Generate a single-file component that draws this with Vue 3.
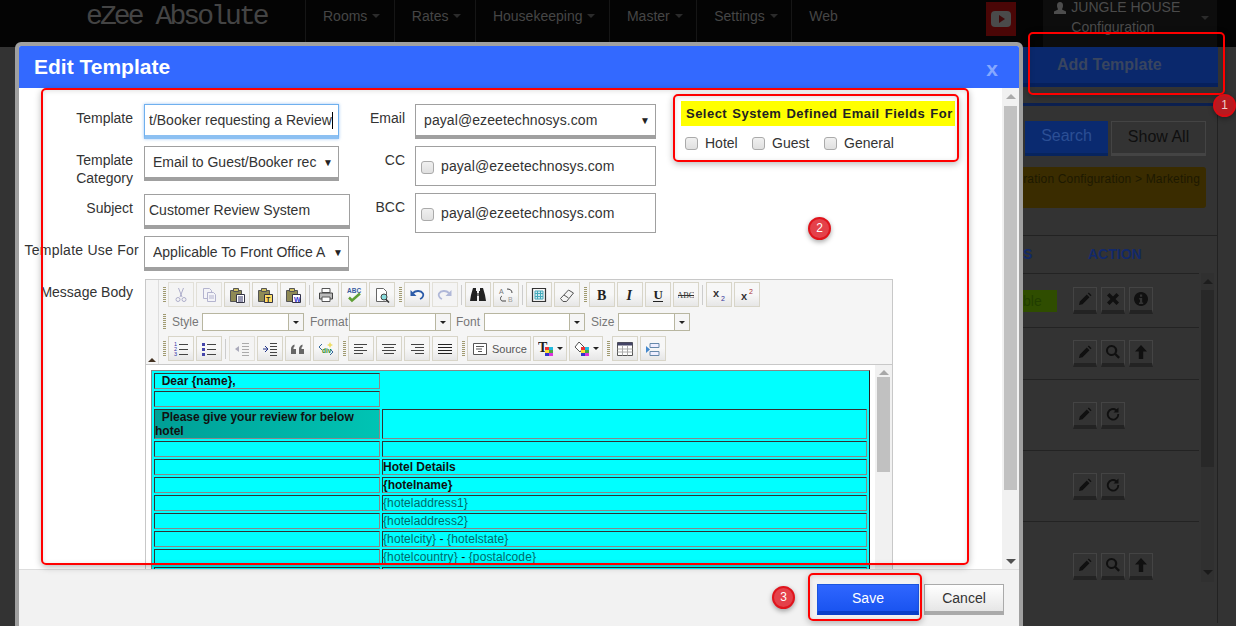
<script setup>
const p = (d, f = 'none', s = 'none', w = 1) => ({ d, f, s, w })
const c = (x, y, r) => `M${x - r} ${y}a${r} ${r} 0 1 0 ${2 * r} 0a${r} ${r} 0 1 0 ${-2 * r} 0z`
const t = (x, y, txt, size, fill, extra = {}) => ({ x, y, txt, size, fill, ...extra })
const serif = { family: 'Liberation Serif', weight: 700 }
const grid = (x, y) => [
  p(`M${x} ${y}h4v3h-4z`, '#e33'), p(`M${x + 4} ${y}h4v3h-4z`, '#2bd'),
  p(`M${x} ${y + 3}h4v3h-4z`, '#fd3'), p(`M${x + 4} ${y + 3}h4v3h-4z`, '#4a4'),
  p(`M${x} ${y + 6}h4v3h-4z`, '#33c'), p(`M${x + 4} ${y + 6}h4v3h-4z`, '#d3d')
]
const clip = (fill, mark, color) => [
  p('M1.5 3.5h11v11h-11z', '#8f8a55', '#555'), p('M4.5 1.5h5v3h-5z', '#d0c060', '#555'),
  p('M7.5 7.5h8v8h-8z', fill, '#334'), t(9, 14.5, mark, 7, color, { weight: 700 })
]
const lines = (rows, color = '#444') => p(rows.map(([x, y, l]) => `M${x} ${y}h${l}`).join(''), 'none', color, 1)
const icons = {
  cut: [p('M5.5 1l3.500 9M10.500 1L7 10', 'none', '#aeaecb'), p(c(5, 12.5, 2), 'none', '#aeaecb'), p(c(11, 12.5, 2), 'none', '#aeaecb')],
  copy: [p('M2.500 1.500h6l2 2v8h-8z', '#f4f4f8', '#b4b4cf'), p('M6.500 5.500h6l2 2v7h-8z', '#f4f4f8', '#b4b4cf'), lines([[8, 9, 5], [8, 11, 5]], '#b4b4cf')],
  paste: [...clip('#fff', '', '#000'), lines([[9, 10, 5], [9, 12, 5], [9, 14, 5]], '#336')],
  pastetext: clip('#fd6', 'T', '#222'),
  pasteword: clip('#fff', 'W', '#33c'),
  print: [p('M4 1.500h8v4H4z', '#fff', '#555'), p('M1.500 6h13v6h-13z', '#bbb', '#444'), p('M4 10h8v4.500H4z', '#fff', '#555')],
  spell: [t(1, 6, 'ABC', 6.5, '#3a5ba0', { weight: 700 }), p('M3 10.500l3 3 8-7', 'none', '#5f9e35', 2.5)],
  preview: [p('M2.500 1.500h7l3 3v10h-10z', '#fff', '#666'), p(c(10, 10, 3), '#8dd', '#444'), p('M12 12.500l3 3', 'none', '#333', 1.6)],
  undo: [p('M4 6c3-3 8-2.500 10 .5 1 2-.5 4.500-3 5.500', 'none', '#2b5ba8', 1.8), p('M1.500 3v6h6z', '#2b5ba8')],
  redo: [p('M12 6c-3-3-8-2.500-10 .5-1 2 .5 4.500 3 5.500', 'none', '#b0b8d8', 1.8), p('M14.500 3v6h-6z', '#b0b8d8')],
  find: [p('M3 1h3v3h1v10H0l1-6zM10 1h3l2 7 1 6H9V4h1z', '#222'), p('M7 6h2v3H7z', '#777')],
  replace: [t(1, 7, 'A', 7, '#777'), t(10, 15, 'B', 7, '#999'), p('M4 9c-2 1-2 4 0 5h4M9 2c3 0 5 1 5 4', 'none', '#444', 1)],
  selectall: [p('M1.500 1.500h13v13h-13z', 'none', '#333', 1.2), p('M4 4h8v8H4z', '#cfeaf0', '#4ab'), p('M6.500 4v8M9.500 4v8M4 6.500h8M4 9.500h8', 'none', '#4ab')],
  eraser: [p('M1.500 11.500l8-8.500 5 3-7 8.500H4z', '#f4f4f4', '#555'), p('M5 8l4.500 3', 'none', '#555')],
  bold: [t(3, 13, 'B', 14, '#222', serif)],
  italic: [t(4.500, 13, 'I', 14, '#222', { ...serif, style: 'italic' })],
  underline: [t(3.500, 12, 'U', 13, '#222', serif), p('M3 14.500h10', 'none', '#222', 1)],
  strike: [t(-1, 11, 'ABC', 8.500, '#333', { family: 'Liberation Serif' }), p('M-1 8.500h18', 'none', '#333', 1)],
  sub: [t(2, 10, 'x', 11, '#333', { weight: 700 }), t(10, 14, '2', 7, '#339')],
  sup: [t(2, 13, 'x', 11, '#333', { weight: 700 }), t(10, 7, '2', 7, '#a33')],
  ol: [t(1, 5, '1', 5.500, '#33a'), t(1, 10, '2', 5.500, '#33a'), t(1, 15, '3', 5.500, '#33a'), lines([[6, 3.5, 9], [6, 8.5, 9], [6, 13.5, 9]])],
  ul: [p('M1 2h3v3H1zM1 7h3v3H1zM1 12h3v3H1z', '#44a'), lines([[6, 3.5, 9], [6, 8.5, 9], [6, 13.5, 9]])],
  outdent: [lines([[8, 2.5, 7], [8, 5.5, 7], [8, 8.5, 7], [8, 11.5, 7], [8, 14.5, 7]], '#aaa'), p('M5 5v6L1 8z', '#aab')],
  indent: [lines([[8, 2.5, 7], [8, 5.5, 7], [8, 8.5, 7], [8, 11.5, 7], [8, 14.5, 7]]), p('M1 8h4M3 5l3 3-3 3', 'none', '#238')],
  quote: [p('M1 13V8c0-2 1-3.500 3.500-4.500v2C3.500 6 3.500 7 3.500 8H6v5zM9 13V8c0-2 1-3.500 3.500-4.500v2c-1 .5-1 1.500-1 2.500H14v5z', '#666')],
  div: [p('M4 3L1 6l3 3M12 8l3 3-3 3', 'none', '#369'), t(4, 12, 'div', 6.5, '#2a8a2a', { weight: 700 }), p('M12 1l1 2 2 1-2 1-1 2-1-2-2-1 2-1z', '#ed6')],
  left: [lines([[1, 3.5, 13], [1, 6.5, 9], [1, 9.5, 13], [1, 12.5, 9]])],
  center: [lines([[1, 3.5, 14], [3, 6.5, 10], [1, 9.5, 14], [3, 12.5, 10]])],
  right: [lines([[2, 3.5, 13], [6, 6.5, 9], [2, 9.5, 13], [6, 12.5, 9]])],
  justify: [lines([[1, 3.5, 14], [1, 6.5, 14], [1, 9.5, 14], [1, 12.5, 14]], '#222')],
  source: [p('M1.500 2.500h13v11h-13z', '#fff', '#555'), lines([[4, 5.5, 8], [4, 8, 6], [6, 10.5, 4]], '#555')],
  textcolor: [t(0, 11, 'T', 14, '#222', serif), ...grid(7, 6)],
  bgcolor: [p('M5 1l5 5-4 5-5-5z', '#fff', '#555'), ...grid(7, 6)],
  table: [p('M.5 1.500h15v13H.5z', '#fff', '#555'), p('M.5 1.500h15v3H.5z', '#446'), p('M5.500 4.500v10M10.500 4.500v10M.5 8h15M.5 11h15', 'none', '#aaa')],
  hr: [p('M5 2.500h9v4H5zM5 10.500h9v4H5z', '#eef', '#68a'), p('M1 5l4 3.500L1 12z', '#48c')]
}
const g = { kind: 'grip' }
const s = { kind: 'sep' }
const b = (icon, off = false) => ({ kind: 'btn', icon, off })
const row1 = [g, b('cut', true), b('copy', true), b('paste'), b('pastetext'), b('pasteword'), s, b('print'), b('spell'), b('preview'), g, b('undo'), b('redo', true), s, b('find'), b('replace'), s, b('selectall'), b('eraser'), g, b('bold'), b('italic'), b('underline'), b('strike'), s, b('sub'), b('sup')]
const row3 = [g, b('ol'), b('ul'), s, b('outdent', true), b('indent'), b('quote'), b('div'), g, b('left'), b('center'), b('right'), b('justify'), g,
  { kind: 'source', icon: 'source' }, { kind: 'color', icon: 'textcolor' }, { kind: 'color', icon: 'bgcolor' }, g, b('table'), b('hr')]
const combos = [
  { label: 'Style', cls: 'c-style' }, { label: 'Format', cls: 'c-format' }, { label: 'Font', cls: 'c-font' }, { label: 'Size', cls: 'c-size' }
]
const nav = ['Rooms', 'Rates', 'Housekeeping', 'Master', 'Settings', 'Web']
const detailRows = [
  [{ t: 'Hotel Details', b: 1 }], [{ t: '{hotelname}', b: 1 }], [{ t: '{hoteladdress1}', ph: 1 }], [{ t: '{hoteladdress2}', ph: 1 }],
  [{ t: '{hotelcity}', ph: 1 }, { t: ' - ' }, { t: '{hotelstate}', ph: 1 }],
  [{ t: '{hotelcountry}', ph: 1 }, { t: ' - ' }, { t: '{postalcode}', ph: 1 }], []
]
const actionIcons = {
  pencil: 'M2 14l.8-3.500 7-7 2.700 2.700-7 7zM10.800 2.500l1-1 2.700 2.700-1 1z',
  cross: 'M4.500 2L8 5.500 11.500 2 14 4.500 10.500 8l3.500 3.500-2.500 2.500L8 10.500 4.500 14 2 11.500 5.500 8 2 4.500z',
  info: 'M8 1a7 7 0 1 0 .01 0zM7 3.500h2.200v2.200H7zM6.200 7h3v4.500h1V13H6v-1.500h1V8.500h-.8z',
  search: 'M6.500 1a5.500 5.500 0 1 0 3.200 10l3.600 3.800 1.700-1.700-3.700-3.600A5.500 5.500 0 0 0 6.500 1zm0 2a3.500 3.500 0 1 1 0 7 3.500 3.500 0 0 1 0-7z',
  up: 'M8 1l6 6.500H10.200V15H5.800V7.500H2z',
  redo: 'M13.500 1.500v5h-5l1.800-1.800A4.300 4.300 0 1 0 12.300 8h1.900A6.200 6.200 0 1 1 11.700 3.300z'
}
const rows = [
  { h: 54, status: true, icons: ['pencil', 'cross', 'info'] },
  { h: 52, icons: ['pencil', 'search', 'up'] },
  { h: 71, icons: ['pencil', 'redo'] },
  { h: 71, icons: ['pencil', 'redo'] },
  { h: 61, low: true, icons: ['pencil', 'search', 'up'] }
]
</script>

<template>
  <div class="page">
    <header class="topbar">
      <div class="logo">eZee Absolute</div>
      <nav class="nav">
        <div v-for="n in nav" :key="n" class="nav-item">{{ n }}<i v-if="n !== 'Web'" class="caret"></i></div>
      </nav>
      <div class="yt">
        <svg width="20" height="16" viewBox="0 0 20 16"><rect width="20" height="16" rx="4" fill="#4a4a4a" /><path d="M8 4l6 4-6 4z" fill="#400a0a" /></svg>
      </div>
      <div class="user">
        <svg class="user-ico" width="14" height="14" viewBox="0 0 14 14"><path d="M7 1c2 0 3 1.500 3 3.500S9 8 9 8.500l4 2V13H1v-2.500l4-2C5 8 4 6.500 4 4.500S5 1 7 1z" fill="#4d4d4d" /></svg>
        <div class="user-text">JUNGLE HOUSE<br />Configuration</div>
        <i class="caret user-caret"></i>
      </div>
    </header>

    <aside class="side">
      <div class="add-btn">Add Template</div>
      <div class="panel">
        <div class="search-row">
          <div class="search-btn">Search</div>
          <div class="all-btn">Show All</div>
        </div>
        <div class="notice">ration Configuration &gt; Marketing</div>
        <div class="thead"><span class="th-s">S</span><span class="th-a">ACTION</span></div>
        <div class="tbody">
          <div class="trows">
            <div v-for="(r, i) in rows" :key="i" class="trow" :class="{ low: r.low }" :style="{ height: r.h + 'px' }">
              <div class="status" :class="{ on: r.status }">{{ r.status ? 'ble' : '' }}</div>
              <div v-for="ic in r.icons" :key="ic" class="act">
                <svg width="16" height="16" viewBox="0 0 16 16"><path :d="actionIcons[ic]" fill="#101010" /></svg>
              </div>
            </div>
          </div>
          <div class="side-scroll">
            <i class="arr-up dark"></i>
            <div class="side-thumb"></div>
            <i class="arr-down dark"></i>
          </div>
        </div>
      </div>
    </aside>

    <section class="modal">
      <div class="modal-head">
        <h1 class="modal-title">Edit Template</h1>
        <span class="modal-x">x</span>
      </div>
      <div class="modal-body">
        <div class="content">
          <div class="top">
            <div class="col-left">
              <div class="row r1">
                <label class="lab">Template</label>
                <div class="field focus f195"><span class="clip">t/Booker requesting a Review</span><i class="cursor"></i></div>
              </div>
              <div class="row r2">
                <label class="lab">Template Category</label>
                <div class="field sel f195"><span class="clipsel">Email to Guest/Booker rec</span><span class="tri">▼</span></div>
              </div>
              <div class="row r3">
                <label class="lab">Subject</label>
                <div class="field f206">Customer Review System</div>
              </div>
              <div class="row">
                <label class="lab wide">Template Use For</label>
                <div class="field sel f205"><span class="clipsel">Applicable To Front Office A</span><span class="tri">▼</span></div>
              </div>
            </div>
            <div class="col-mid">
              <div class="row r1">
                <label class="lab2">Email</label>
                <div class="field sel f241"><span class="clipsel">payal@ezeetechnosys.com</span><span class="tri">▼</span></div>
              </div>
              <div class="row r1b">
                <label class="lab2">CC</label>
                <div class="box"><input class="cb" type="checkbox" /><span>payal@ezeetechnosys.com</span></div>
              </div>
              <div class="row">
                <label class="lab2">BCC</label>
                <div class="box"><input class="cb" type="checkbox" /><span>payal@ezeetechnosys.com</span></div>
              </div>
            </div>
            <div class="col-right">
              <div class="fields-title">Select System Defined Email Fields For</div>
              <div class="fields-checks">
                <label class="chk c1"><input class="cb" type="checkbox" />Hotel</label>
                <label class="chk c2"><input class="cb" type="checkbox" />Guest</label>
                <label class="chk"><input class="cb" type="checkbox" />General</label>
              </div>
            </div>
          </div>

          <div class="message">
            <label class="lab msg-lab">Message Body</label>
            <div class="editor">
              <div class="toolbar">
                <div class="collapse"><i class="collapse-tri"></i></div>
                <div class="bars">
                  <div class="bar">
                    <template v-for="(it, i) in row1" :key="i">
                      <i v-if="it.kind === 'grip'" class="grip"></i>
                      <i v-else-if="it.kind === 'sep'" class="tsep"></i>
                      <button v-else class="tbtn" :class="{ off: it.off }">
                        <svg width="16" height="16" viewBox="0 0 16 16">
                          <template v-for="(sh, j) in icons[it.icon]" :key="j">
                            <path v-if="sh.d" :d="sh.d" :fill="sh.f" :stroke="sh.s" :stroke-width="sh.w" />
                            <text v-else :x="sh.x" :y="sh.y" :font-size="sh.size" :fill="sh.fill" :font-weight="sh.weight || 400" :font-style="sh.style || 'normal'" :font-family="sh.family || 'Liberation Sans'">{{ sh.txt }}</text>
                          </template>
                        </svg>
                      </button>
                    </template>
                  </div>
                  <div class="bar bar2">
                    <i class="grip g2"></i>
                    <div v-for="co in combos" :key="co.label" class="combo-wrap" :class="co.cls">
                      <span class="combo-label">{{ co.label }}</span>
                      <div class="combo"><span class="combo-box"></span><span class="combo-btn"><i class="mini"></i></span></div>
                    </div>
                  </div>
                  <div class="bar bar3">
                    <template v-for="(it, i) in row3" :key="i">
                      <i v-if="it.kind === 'grip'" class="grip"></i>
                      <i v-else-if="it.kind === 'sep'" class="tsep"></i>
                      <button v-else class="tbtn" :class="[{ off: it.off }, it.kind === 'source' ? 'srcbtn' : '', it.kind === 'color' ? 'colbtn' : '']">
                        <svg width="16" height="16" viewBox="0 0 16 16">
                          <template v-for="(sh, j) in icons[it.icon]" :key="j">
                            <path v-if="sh.d" :d="sh.d" :fill="sh.f" :stroke="sh.s" :stroke-width="sh.w" />
                            <text v-else :x="sh.x" :y="sh.y" :font-size="sh.size" :fill="sh.fill" :font-weight="sh.weight || 400" :font-style="sh.style || 'normal'" :font-family="sh.family || 'Liberation Sans'">{{ sh.txt }}</text>
                          </template>
                        </svg>
                        <span v-if="it.kind === 'source'" class="srctxt">Source</span>
                        <i v-if="it.kind === 'color'" class="mini"></i>
                      </button>
                    </template>
                  </div>
                </div>
              </div>
              <div class="frame">
                <div class="doc">
                  <table class="mail">
                    <colgroup><col class="col-a" /><col /></colgroup>
                    <tbody>
                      <tr>
                        <td class="bold">&nbsp;&nbsp;Dear {name},</td>
                        <td rowspan="2" class="blank"></td>
                      </tr>
                      <tr><td></td></tr>
                      <tr>
                        <td class="bold teal">&nbsp;&nbsp;Please give your review for below hotel</td>
                        <td></td>
                      </tr>
                      <tr><td></td><td></td></tr>
                      <tr v-for="(parts, i) in detailRows" :key="i">
                        <td></td>
                        <td :class="{ bold: parts[0] && parts[0].b }"><span v-for="(q, k) in parts" :key="k" :class="{ ph: q.ph }">{{ q.t }}</span></td>
                      </tr>
                    </tbody>
                  </table>
                </div>
                <div class="inner-scroll">
                  <i class="arr-up"></i>
                  <div class="inner-thumb"></div>
                </div>
              </div>
            </div>
          </div>
        </div>
        <div class="vscroll">
          <i class="arr-up"></i>
          <div class="vthumb"></div>
          <i class="arr-down"></i>
        </div>
      </div>
      <div class="modal-foot">
        <button class="save">Save</button>
        <button class="cancel">Cancel</button>
      </div>
    </section>

    <div class="mark m1"></div>
    <div class="mark m2"></div>
    <div class="mark m3"></div>
    <div class="mark m4"></div>
    <div class="badge b1">1</div>
    <div class="badge b2">2</div>
    <div class="badge b3">3</div>
  </div>
</template>

<style>
html, body { margin: 0; overflow: hidden; background: #333; }
</style>

<style scoped>
.page { position: relative; width: 1236px; height: 626px; overflow: hidden; background: #333; font-family: "Liberation Sans", Arial, sans-serif; font-size: 14px; color: #333; }
* { box-sizing: border-box; }
i { display: block; font-style: normal; }
.topbar { height: 47px; background: #040404; display: flex; align-items: flex-start; }
.logo { font-family: "Liberation Mono", monospace; font-size: 28px; letter-spacing: -2.9px; color: #444; margin: 1px 0 0 86px; width: 219px; line-height: 32px; }
.nav { display: flex; height: 47px; }
.nav-item { display: flex; align-items: center; padding: 0 13.5px 10px 17px; border-left: 1px solid #161616; color: #464646; height: 42px; }
.caret { width: 0; height: 0; border: 4px solid transparent; border-top-color: #2b2b2b; border-bottom: 0; margin-left: 5px; }
.yt { width: 30px; height: 34px; margin: 2px 0 0 61px; background: #4a0606; display: flex; align-items: center; justify-content: center; }
.nav-item:last-child { width: 134px; }
.user { width: 174px; height: 47px; margin-left: 27px; background: #0d0d0d; display: flex; padding-left: 10px; position: relative; }
.user-ico { margin-top: 1px; }
.user-text { margin-left: 4px; color: #4b4b4b; line-height: 20px; margin-top: -3px; }
.user-caret { position: absolute; right: 8px; top: 16px; margin: 0; }
.side { width: 213px; margin-left: 1023px; }
.add-btn { width: 195px; height: 40px; background: #0a286c; border-bottom: 4px solid #06205c; color: #39455f; font-weight: 700; font-size: 16px; line-height: 35px; padding-left: 34px; }
.panel { margin-top: 16px; width: 195px; height: 520px; border-top: 3px solid #0c2050; border-right: 1px solid #222; }
.search-row { display: flex; gap: 3px; margin: 15px 0 0 2px; }
.search-btn { width: 83px; height: 35px; background: #0a2a70; border-bottom: 3px solid #07245e; color: #2c4f95; font-size: 16px; line-height: 30px; text-align: center; }
.all-btn { width: 95px; height: 35px; border: 1px solid #444; border-bottom: 3px solid #444; color: #0f0f0f; font-size: 16px; line-height: 29px; text-align: center; }
.notice { margin-top: 11px; width: 183px; height: 41px; background: #3a2c00; border-radius: 0 3px 3px 0; color: #1d1900; font-size: 12px; letter-spacing: .18px; text-align: right; padding: 5px 6px 0 0; white-space: nowrap; overflow: hidden; }
.thead { margin-top: 27px; height: 38px; border-top: 1px solid #222; position: relative; color: #12296a; font-weight: 700; font-size: 14px; line-height: 36px; }
.th-s { position: absolute; left: 0; }
.th-a { position: absolute; left: 65px; }
.tbody { display: flex; }
.trows { width: 176px; }
.trow { display: flex; align-items: center; gap: 4px; border-top: 1px solid #232323; }
.trow.low { padding-top: 28px; }
.status { width: 46px; height: 22px; color: #213d00; font-size: 14px; line-height: 22px; }
.status.on { background: linear-gradient(90deg, #2f4d00 74%, #333 74%); }
.act { width: 24px; height: 27px; border: 1px solid #444; border-bottom: 4px solid #232323; display: flex; align-items: center; justify-content: center; }
.side-scroll { position: relative; width: 13px; margin-left: 2px; height: 309px; background: #303030; }
.side-thumb { position: absolute; top: 17px; width: 13px; height: 177px; background: #282828; }
.arr-up, .arr-down { width: 0; height: 0; border: 5px solid transparent; position: absolute; left: 50%; margin-left: -5px; }
.arr-up { border-bottom: 5px solid #aaa; border-top: 0; top: 6px; }
.arr-down { border-top: 5px solid #444; border-bottom: 0; bottom: 6px; }
.side-scroll .arr-up { border-bottom-color: #1d1d1d; top: 6px; }
.side-scroll .arr-down { border-top-color: #1a1a1a; bottom: 7px; }

.modal { position: absolute; left: 15px; top: 42px; width: 1008px; height: 600px; border: 4px solid #a0a0a0; border-radius: 6px 6px 0 0; background: #fff; overflow: hidden; }
.modal-head { height: 42px; background: #3369ff; display: flex; justify-content: space-between; align-items: center; padding: 0 21px 0 15px; }
.modal-title { margin: 0; font-size: 21px; font-weight: 700; color: #fff; }
.modal-x { font-size: 21px; font-weight: 700; color: #86a8ff; margin-top: 3px; }
.modal-body { display: flex; height: 481px; }
.content { width: 983px; overflow: hidden; padding-top: 16px; }
.vscroll { position: relative; width: 17px; background: #f1f1f1; }
.vscroll .arr-down { border-top-color: #505050; bottom: 5px; }
.vthumb { position: absolute; left: 2px; top: 18px; width: 13px; height: 384px; background: #c1c1c1; }
.top { display: flex; height: 167px; }
.col-left { width: 331px; }
.col-left .row { height: 35px; }
.col-mid { width: 306px; }
.col-right { width: 274px; margin-left: 25px; margin-top: -3px; }
.row { display: flex; }
.r1 { margin-bottom: 7px; }
.r2 { margin-bottom: 13px; }
.r3 { margin-bottom: 7px; }
.r1b { margin-bottom: 7px; }
.lab { width: 120px; padding: 5px 6px 0 0; text-align: right; line-height: 18px; flex: none; color: #333; margin-right: 5px; }
.lab.wide { padding-right: 0; white-space: nowrap; padding-top: 5px; letter-spacing: .25px; }
.lab2 { width: 55px; margin-right: 10px; padding-top: 5px; text-align: right; line-height: 18px; flex: none; }
.field { height: 35px; border: 1px solid #a0a0a0; border-bottom: 4px solid #a0a0a0; display: flex; align-items: center; padding-left: 4px; white-space: nowrap; overflow: hidden; background: #fff; }
.f195 { width: 195px; }
.f206 { width: 206px; }
.f205 { width: 205px; }
.f241 { width: 241px; }
.focus { border-color: #6fb0ee; border-bottom-color: #8cc0f2; box-shadow: 0 0 3px rgba(90, 160, 240, .6); }
.clip { overflow: hidden; }
.cursor { width: 1px; height: 17px; background: #000; }
.sel { padding-left: 8px; position: relative; }
.clipsel { flex: 1; overflow: hidden; margin-right: 13px; }
.tri { position: absolute; right: 5px; top: 11px; font-size: 10px; line-height: 10px; color: #222; }
.f241 .clipsel, .box { letter-spacing: .09px; }
.box { width: 241px; height: 40px; border: 1px solid #a0a0a0; display: flex; align-items: center; padding-left: 5px; color: #333; }
.cb { appearance: none; width: 13px; height: 13px; margin: 2px 7px 0 0; border: 1px solid #aaa; border-radius: 3px; background: linear-gradient(#f0f0f0, #e0e0e0); flex: none; }
.fields-title { height: 25px; background: #ff0; padding-left: 5px; font-weight: 700; font-size: 13px; line-height: 25px; color: #222; white-space: nowrap; word-spacing: 1px; letter-spacing: .48px; }
.fields-checks { display: flex; margin-top: 8px; padding-left: 4px; }
.chk { display: flex; align-items: center; line-height: 18px; }
.chk .cb { margin: 0 7px 0 0; }
.c1 { width: 67px; }
.c2 { width: 72px; }
.message { display: flex; margin-top: 8px; }
.msg-lab { white-space: nowrap; padding-top: 4px; width: 120px; margin-right: 6px; }
.editor { width: 748px; border: 1px solid #c8c8c8; flex: none; }
.toolbar { display: flex; height: 85px; background: #f5f5f5; border-bottom: 1px solid #c8c8c8; }
.collapse { width: 13px; border-right: 1px solid #ddd; position: relative; }
.collapse-tri { position: absolute; left: 2px; bottom: 2px; width: 0; height: 0; border: 4px solid transparent; border-bottom: 4px solid #432; border-top: 0; }
.bars { padding: 2px 0 0 2px; }
.bar { display: flex; align-items: center; height: 25px; }
.bar2 { height: 18px; margin-top: 6px; }
.bar3 { margin-top: 5px; }
.grip { width: 3px; height: 16px; margin: 0 2px; flex: none; background: repeating-linear-gradient(#a09a70 0 1px, transparent 1px 2px); }
.g2 { margin-right: 6px; }
.tsep { width: 1px; height: 20px; margin: 0 3px 0 1px; background: #ccc; flex: none; }
.tbtn { width: 26px; height: 25px; margin: 0 2px 0 0; padding: 0; border: 1px solid #d8d5c8; background: linear-gradient(#f7f7f7 50%, #e6e6e6); display: flex; align-items: center; justify-content: center; flex: none; font-family: inherit; }
.tbtn.off { background: #f4f4f4; border-color: #e2e0d8; }
.srcbtn { width: 64px; justify-content: flex-start; padding-left: 4px; }
.srctxt { font-size: 11px; color: #555; margin-left: 4px; }
.colbtn { width: 34px; gap: 3px; justify-content: flex-start; padding-left: 4px; }
.mini { width: 0; height: 0; border: 3px solid transparent; border-top: 3px solid #222; border-bottom: 0; }
.combo-wrap { display: flex; align-items: center; }
.combo-label { font-size: 12px; color: #777; white-space: nowrap; }
.combo { display: flex; height: 18px; border: 1px solid #b8b6a0; background: #fff; margin-left: 5px; flex: none; }
.combo-box { flex: 1; }
.combo-btn { width: 15px; border-left: 1px solid #b8b6a0; background: #f5f5f5; display: flex; align-items: center; justify-content: center; }
.c-style .combo-label { width: 25px; }
.c-style .combo { width: 102px; }
.c-format { margin-left: 6px; }
.c-format .combo-label { width: 34px; }
.c-format .combo { width: 102px; }
.c-font { margin-left: 5px; }
.c-font .combo-label { width: 23px; }
.c-font .combo { width: 101px; }
.c-size { margin-left: 6px; }
.c-size .combo-label { width: 22px; }
.c-size .combo { width: 72px; }
.frame { display: flex; background: #fff; height: 260px; }
.doc { width: 729px; padding: 5px 0 0 5px; }
.mail { width: 719px; background: #0ff; border: 1px solid; border-color: #888 #222 #222 #888; border-spacing: 2px; border-collapse: separate; table-layout: fixed; font-size: 12px; line-height: 14px; letter-spacing: .1px; color: #111; }
.col-a { width: 226px; }
.mail td { height: 16px; padding: 0; border: 1px solid; border-color: #333 #888 #888 #333; vertical-align: middle; }
.mail .blank { border: 0; }
.mail .bold { font-weight: 700; letter-spacing: 0; }
.mail .teal { background: linear-gradient(90deg, #009f96, #00c4b4); }
.ph { color: #006a6a; }
.inner-scroll { position: relative; width: 17px; background: #f1f1f1; }
.inner-thumb { position: absolute; left: 2px; top: 12px; width: 13px; height: 95px; background: #c1c1c1; }
.inner-scroll .arr-up { border-bottom-color: #a8a8a8; top: 5px; }
.modal-foot { height: 57px; background: #f2f2f2; border-top: 1px solid #ddd; display: flex; justify-content: flex-end; gap: 5px; padding: 14px 15px 0 0; }
.save, .cancel { height: 31px; padding: 0; font-family: inherit; font-size: 14px; }
.save { width: 102px; border: 1px solid #1a55e0; border-bottom: 4px solid #0b3fc8; background: linear-gradient(#2f66ff, #1a54f0); color: #fff; }
.cancel { width: 80px; border: 1px solid #aaa; border-bottom: 4px solid #aaa; background: linear-gradient(#fff, #e6e6e6); color: #333; }
.mark { position: absolute; border: 2px solid #f00; border-radius: 5px; box-shadow: 0 2px 7px rgba(0, 0, 0, .28), inset 0 1px 5px rgba(0, 0, 0, .12); }
.m1 { left: 1028px; top: 32px; width: 197px; height: 63px; }
.m2 { left: 41px; top: 88px; width: 928px; height: 477px; }
.m3 { left: 673px; top: 94px; width: 286px; height: 68px; }
.m4 { left: 808px; top: 573px; width: 114px; height: 48px; }
.badge { position: absolute; width: 23px; height: 23px; border-radius: 50%; border: 2px solid #e0141c; background: #e4414a; color: #fff; font-size: 12px; line-height: 19px; text-align: center; box-shadow: 0 2px 5px rgba(0, 0, 0, .35); }
.b1 { left: 1213px; top: 94px; background: #b81a20; border-color: #d80c14; color: #ecc; }
.b2 { left: 808px; top: 217px; }
.b3 { left: 772px; top: 586px; }
</style>
